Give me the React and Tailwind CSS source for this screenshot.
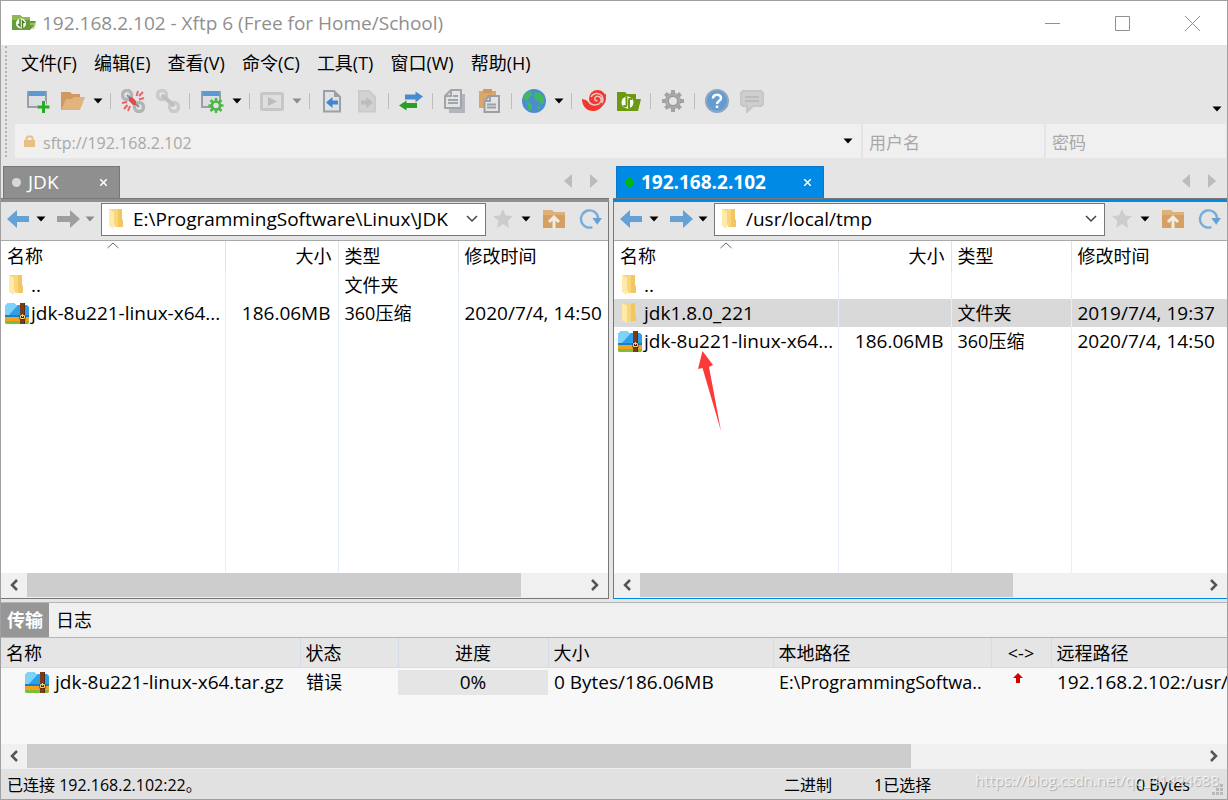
import { useState } from 'react';
import clsx from 'clsx';

const MENUS = ['文件(F)', '编辑(E)', '查看(V)', '命令(C)', '工具(T)', '窗口(W)', '帮助(H)'];

/* ---------- small glyphs ---------- */

function Caret({ className }) {
  return (
    <svg width="10" height="6" viewBox="0 0 10 6" className={clsx('shrink-0', className)} fill="currentColor">
      <path d="M0.500 0.500h9L5 5.500z" />
    </svg>
  );
}

function FolderIcon() {
  return (
    <svg width="16" height="22" viewBox="0 0 16 22" className="shrink-0">
      <path d="M1 1h13v18h-7z" fill="#f8d77c" />
      <path d="M10 1h4v10l1 1v7h-5z" fill="#f0c763" />
      <path d="M1 1l5 3v17l-5-3z" fill="#ffeaa9" />
    </svg>
  );
}

function ZipIcon() {
  return (
    <svg width="24" height="22" viewBox="0 0 24 22" className="shrink-0">
      <path d="M0 4l3-3h6l2 2h11l2 2v10H0z" fill="#2f9fe8" />
      <path d="M0 4l3-3h6l2 2h2L3 14H0z" fill="#7fd3fb" />
      <path d="M0 13h24v2H0z" fill="#1583c9" />
      <path d="M0 15h24v4H0z" fill="#f6a01d" />
      <path d="M0 19h24v2l-1 1H1l-1-1z" fill="#7cbf35" />
      <path d="M15 1h5v21h-5z" fill="#7a3b1c" />
      <path d="M19 1h1v21h-1z" fill="#5a2912" />
      <path d="M14.500 13.500h6v4h-6z" fill="#4d2310" />
      <path d="M15.500 13.500h4v3h-4zM17.500 12v3" fill="none" stroke="#f2cf7a" />
    </svg>
  );
}

function ArrowIcon({ back, className }) {
  return (
    <svg width="23" height="18" viewBox="0 0 23 18" className={clsx('shrink-0', className)} fill="currentColor">
      {back ? <path d="M0 9L10 0v6h12v6H10v6z" /> : <path d="M23 9L13 0v6H0v6h13v6z" />}
    </svg>
  );
}

function Svg({ children }) {
  return (
    <svg width="24" height="24" viewBox="0 0 24 24" fill="none" className="shrink-0">
      {children}
    </svg>
  );
}

const ICONS = {
  newSession: (
    <Svg>
      <path d="M2 3h18v15H2z" fill="#dcdee1" stroke="#9aa0a6" strokeWidth="2" />
      <path d="M2.500 2h17v5h-17z" fill="#5b9bd5" />
      <path d="M17.500 12v12M11.500 18h12" stroke="#e4e4e4" strokeWidth="5" />
      <path d="M17.500 12v12M11.500 18h12" stroke="#27ab27" strokeWidth="3" />
    </Svg>
  ),
  open: (
    <Svg>
      <path d="M0 3h9l2 2h8v16H0z" fill="#cf9960" />
      <path d="M5 10h6l2-2h11l-5 13H0z" fill="#e0b47c" />
    </Svg>
  ),
  disconnect: (
    <Svg>
      <circle cx="6" cy="6" r="4.500" stroke="#b2b5b8" strokeWidth="3.500" />
      <circle cx="18" cy="18" r="4.500" stroke="#b2b5b8" strokeWidth="3.500" />
      <path d="M6 6l3 3M15 15l3 3" stroke="#8a8f94" strokeWidth="2" />
      <path d="M8 8.500l3-.5 4 4v4h-3l-4-4z" fill="#e5484d" />
      <path d="M15.500 7l1.500-5M18 7l4-4M18 10.500l5-1.500M9 17l-2 5M6.500 16L3 20M6 13l-5 1" stroke="#ee6266" strokeWidth="2" />
    </Svg>
  ),
  connect: (
    <Svg>
      <circle cx="6" cy="6" r="4.500" stroke="#cacaca" strokeWidth="3.500" />
      <circle cx="18" cy="18" r="4.500" stroke="#cacaca" strokeWidth="3.500" />
      <path d="M7 7l10 9" stroke="#bfbfbf" strokeWidth="4" strokeLinecap="round" />
    </Svg>
  ),
  properties: (
    <Svg>
      <path d="M2 3h18v15H2z" fill="#dcdee1" stroke="#9aa0a6" strokeWidth="2" />
      <path d="M2.500 2h17v5h-17z" fill="#5b9bd5" />
      <path d="M16 9v15M8.500 16.500h15M10.500 11l11 11M21.500 11l-11 11" stroke="#4db648" strokeWidth="2.500" />
      <circle cx="16" cy="16.500" r="4" fill="#e2e3e5" stroke="#4db648" strokeWidth="2.500" />
    </Svg>
  ),
  play: (
    <Svg>
      <rect x="1.500" y="4.500" width="21" height="16" rx="1" fill="#dedede" stroke="#c6c6c6" strokeWidth="3" />
      <path d="M8 8l9 4.500L8 17z" fill="#bcbcbc" />
    </Svg>
  ),
  docIn: (
    <Svg>
      <path d="M4 2h10l6 6v14.500H4z" fill="#dfe1e3" stroke="#9aa0a6" strokeWidth="2" />
      <path d="M14 2v6h6" fill="#9aa0a6" />
      <path d="M6 13.500L12.500 8v3.500H18v4h-5.500V19z" fill="#4385cf" />
    </Svg>
  ),
  docOut: (
    <Svg>
      <path d="M4 2h10l6 6v14.500H4z" fill="#d2d2d2" stroke="#cbcbcb" strokeWidth="2" />
      <path d="M18 13.500L11.500 8v3.500H6v4h5.500V19z" fill="#bcbcbc" />
    </Svg>
  ),
  transfer: (
    <Svg>
      <path d="M24 7.500L16.500 2.500v3H6v5h10.500v3z" fill="#4a8ad0" />
      <path d="M0 16.500L7.500 11.500v2.500H18v5H7.500v2.500z" fill="#2a9f26" />
    </Svg>
  ),
  copy: (
    <Svg>
      <path d="M6 5h16v19H6z" fill="#b1b6be" />
      <path d="M8 1h10v18H2V7z" fill="#e3e3e3" stroke="#a0a5aa" strokeWidth="2" />
      <path d="M3 7h5V2M5 11h10M5 14h10M10 7h5" stroke="#a0a5aa" strokeWidth="2" />
    </Svg>
  ),
  paste: (
    <Svg>
      <path d="M1 2h17v17H1z" fill="#d9a76c" />
      <path d="M5 0h9v4H5z" fill="#cf9a5c" />
      <path d="M11 7h10v16H6.500V12z" fill="#e3e3e3" stroke="#9aa0a6" strokeWidth="2" />
      <path d="M7 12h5V8M9 15.500h9M9 18.500h9" stroke="#9aa0a6" strokeWidth="2" />
    </Svg>
  ),
  globe: (
    <Svg>
      <circle cx="12" cy="12" r="12" fill="#4c8bd0" />
      <path d="M2 6c2-3 4-4 7-4l1 4-3 3-1 3-3-1-2-1zM13 3l5 1 4 4v6l-3 2-2-4-4-1-1-4zM5 13l5 2v4l-2 3-2-2zM15 17l4 1-3 4z" fill="#3fb960" />
    </Svg>
  ),
  xshell: (
    <Svg>
      <circle cx="15.500" cy="9.500" r="8.500" fill="#f0382f" />
      <path d="M0 10c3 .5 5 1 7 4 3 3 8 3 11 0 2-2 3-5 2-8l4-1c0 7-3 15-11 17C5 23 0 17 0 10z" fill="#f0382f" />
      <path d="M7 13c3 4 10 4 12-1 1-4-3-6-5.500-4-2 2 0 4.500 2 3.500M9 8c2-4 8-5 11-1 1 2 1 5 0 7" stroke="#f2c4c0" strokeWidth="1.500" />
    </Svg>
  ),
  xftp: (
    <Svg>
      <path d="M0 3h8l2 2h9v5h5l-3 12H0z" fill="#6b9a10" />
      <circle cx="10.500" cy="13.500" r="6" fill="#fff" />
      <path d="M9.500 8v8c0 2-2.500 2-2.500 0M12 19v-8c0-2 2.500-2 2.500 0" stroke="#6b9a10" strokeWidth="2" />
    </Svg>
  ),
  gear: (
    <Svg>
      <path d="M12 1v22M1 12h22M4.500 4.500l15 15M19.500 4.500l-15 15" stroke="#a3a3a3" strokeWidth="4" />
      <circle cx="12" cy="12" r="6" fill="#e4e4e4" stroke="#999" strokeWidth="4" />
      <circle cx="12" cy="12" r="6.500" stroke="#acacac" strokeWidth="2" />
    </Svg>
  ),
  help: (
    <Svg>
      <circle cx="12" cy="12" r="11" fill="#659bd3" stroke="#8fa6c0" strokeWidth="2" />
      <path d="M8 9.500c0-5 8-5 8-.5 0 3-4 3-4 6M12 16.500V19" stroke="#fff" strokeWidth="2.500" />
    </Svg>
  ),
  chat: (
    <Svg>
      <path d="M3 2h18l2 2v11l-2 2H13l-6 6v-6H3l-2-2V4z" fill="#cecece" stroke="#c6c6c6" strokeWidth="2" />
      <path d="M5 8h14M5 12h14" stroke="#bcbcbc" strokeWidth="2" />
    </Svg>
  ),
};

const TOOLBAR = [
  ['newSession', '新建'], ['open', '打开'], ['caret', '打开列表'], ['sep'],
  ['disconnect', '断开'], ['connect', '重新连接'], ['sep'],
  ['properties', '属性'], ['caret', '属性列表'], ['sep'],
  ['play', '运行'], ['caretOff', '运行列表'], ['sep'],
  ['docIn', '传输到左侧'], ['docOut', '传输到右侧'], ['sep'],
  ['transfer', '同步'], ['sep'],
  ['copy', '复制'], ['paste', '粘贴'], ['sep'],
  ['globe', '语言'], ['caret', '语言列表'], ['sep'],
  ['xshell', 'Xshell'], ['xftp', 'Xftp'], ['sep'],
  ['gear', '选项'], ['sep'],
  ['help', '帮助'], ['chat', '反馈'],
];

function Toolbar() {
  return (
    <div className="flex items-center h-[38px] pl-[11px]">
      {TOOLBAR.map(([kind, label], i) => {
        if (kind === 'sep') {
          return (
            <span key={i} className="flex justify-center w-[9px]">
              <span className="w-px h-4 bg-[#bdbdbd]" />
            </span>
          );
        }
        if (kind === 'caret' || kind === 'caretOff') {
          return (
            <button key={i} aria-label={label} className="flex justify-center w-4">
              <Caret className={kind === 'caret' ? 'text-black' : 'text-[#8c8c8c]'} />
            </button>
          );
        }
        return (
          <button key={i} aria-label={label} className="pl-[6px] pr-[5px] shrink-0">
            {ICONS[kind]}
          </button>
        );
      })}
      <button aria-label="更多" className="ml-auto mt-4 mr-[5px]"><Caret /></button>
    </div>
  );
}

/* ---------- shared parts ---------- */

function ScrollBar({ thumb }) {
  return (
    <div className="flex h-[25px] bg-[#f0f0f0] shrink-0 pb-px">
      <button aria-label="向左滚动" className="flex items-center justify-center w-[26px] text-[#555]">
        <svg width="10" height="12" viewBox="0 0 10 12" fill="none" stroke="currentColor" strokeWidth="2.500"><path d="M8 1L3 6l5 5" /></svg>
      </button>
      <div className="flex-1">
        <div className="h-full bg-[#cdcdcd]" style={{ width: `${thumb}%` }} />
      </div>
      <button aria-label="向右滚动" className="flex items-center justify-center w-[26px] text-[#555]">
        <svg width="10" height="12" viewBox="0 0 10 12" fill="none" stroke="currentColor" strokeWidth="2.500"><path d="M2 1l5 5-5 5" /></svg>
      </button>
    </div>
  );
}

function FilePanel({ active, title, path, rows, thumb, children }) {
  const [dir, setDir] = useState(path);
  return (
    <section className="flex flex-col min-w-0">
      {/* Tabs */}
      <div className="flex items-end h-[32px]">
        <div
          className={clsx(
            'flex items-center h-8 pl-2 pr-2 border border-b-0 text-[19px] text-white',
            active ? 'ml-[3px] w-[208px] bg-[#008ae6] border-[#0a78c8] font-bold' : 'ml-[2px] w-[117px] bg-[#8f8f8f] border-[#777]',
          )}
        >
          <span className={clsx('w-[9px] h-[9px] rounded-full mr-[7px]', active ? 'bg-[#00b812]' : 'bg-[#d8d8d8]')} />
          <span>{title}</span>
          <button aria-label="关闭标签" className="ml-auto mr-1">
            <svg width="7" height="7" viewBox="0 0 7 7" stroke="currentColor" strokeWidth="1.500"><path d="M0 0l7 7M7 0L0 7" /></svg>
          </button>
        </div>
        <div className="flex gap-4 ml-auto mb-[10px] pr-[11px] text-[#bcbcbc]">
          <button aria-label="上一个标签">
            <svg width="9" height="14" viewBox="0 0 9 14" fill="currentColor"><path d="M8 0v14L0 7z" /></svg>
          </button>
          <button aria-label="下一个标签">
            <svg width="9" height="14" viewBox="0 0 9 14" fill="currentColor"><path d="M1 0v14l8-7z" /></svg>
          </button>
        </div>
      </div>
      <div className={clsx('h-1 border-t border-t-[#777]', active ? 'bg-[#008ae6]' : 'bg-[#8f8f8f]')} />

      <div className={clsx('flex flex-col flex-1 min-h-0 border-b', active ? 'border-l border-l-[#777] border-b-[#0087e0]' : 'border-r border-r-[#777] border-b-[#777]')}>
        {/* Navigation */}
        <div className="flex items-center h-[39px] pl-[6px] pr-[6px] pb-1 border-b border-[#a9a9a9] bg-[#e5e5e5]">
          <button aria-label="后退"><ArrowIcon back className="text-[#63a1d6]" /></button>
          <button aria-label="后退列表" className="ml-[6px] mr-[11px]"><Caret /></button>
          <button aria-label="前进"><ArrowIcon className={active ? 'text-[#63a1d6]' : 'text-[#9e9e9e]'} /></button>
          <button aria-label="前进列表" className="ml-[5px] mr-[6px]"><Caret className={active ? 'text-black' : 'text-[#8c8c8c]'} /></button>
          <div className="flex items-center flex-1 min-w-0 h-[33px] pl-[6px] border border-[#777] bg-white">
            <FolderIcon />
            <input
              aria-label="路径"
              value={dir}
              onChange={(e) => setDir(e.target.value)}
              className="flex-1 min-w-0 ml-[9px] text-[19px] outline-none"
            />
            <button aria-label="路径列表" className="mr-[7px]">
              <svg width="12" height="8" viewBox="0 0 12 8" fill="none" stroke="#444" strokeWidth="1.500"><path d="M1 1l5 5 5-5" /></svg>
            </button>
          </div>
          <button aria-label="收藏" className="ml-[7px] text-[#cccccc]">
            <svg width="20" height="20" viewBox="0 0 20 20" fill="currentColor"><path d="M10 0l2.800 6.500L20 7l-5 4.700L16 19l-6-4-6 4 1.500-7.300L0 7l7-.5z" /></svg>
          </button>
          <button aria-label="收藏列表" className="ml-2 mr-3"><Caret /></button>
          <button aria-label="上级目录">
            <svg width="22" height="20" viewBox="0 0 22 20">
              <path d="M0 1h9l2 2h11v16H0z" fill="#deb07a" />
              <path d="M0 6h22v13H0z" fill="#d5a063" />
              <path d="M6 13l5-5 5 5M11 9v11" fill="none" stroke="#f4ece2" strokeWidth="3" />
            </svg>
          </button>
          <button aria-label="刷新" className="ml-[14px]">
            <svg width="23" height="22" viewBox="0 0 24 22" fill="none">
              <path d="M14 19.500A9 9 0 1 1 20 10" stroke="#79add9" strokeWidth="2.500" />
              <path d="M14 10h10l-5 7z" fill="#63a1d6" />
            </svg>
          </button>
        </div>

        {/* File list */}
        <div className="relative flex-1 min-h-0 bg-white overflow-hidden">
          <table className="w-full h-full table-fixed border-collapse text-[18px]">
            <colgroup>
              <col className="w-[224px]" />
              <col className="w-[113px]" />
              <col className="w-[120px]" />
              <col />
            </colgroup>
            <thead>
              <tr className="h-[30px] text-left [&>th]:font-normal [&>th]:p-0 [&>th]:border-r [&>th]:border-[#e2e2e2] [&>th:last-child]:border-0">
                <th>
                  <div className="relative pl-[6px]">
                    名称
                    <svg width="12" height="7" viewBox="0 0 12 7" fill="none" stroke="#666" className="absolute left-[106px] -top-px"><path d="M0.500 6L6 1l5.500 5" /></svg>
                  </div>
                </th>
                <th><div className="pr-[6px] text-right">大小</div></th>
                <th><div className="pl-[6px]">类型</div></th>
                <th><div className="pl-[6px]">修改时间</div></th>
              </tr>
            </thead>
            <tbody className="[&_td]:p-0 [&_td]:border-r [&_td]:border-[#e6eef9] [&_td:last-child]:border-0 whitespace-nowrap">
              {rows.map((r) => (
                <tr key={r.name} className={clsx('h-7', r.selected && 'bg-[#d9d9d9]')}>
                  <td>
                    {r.kind === 'zip' ? (
                      <div className="flex items-center pl-1"><ZipIcon /><span className="ml-[2px] text-[19px] leading-7">{r.name}</span></div>
                    ) : (
                      <div className="flex items-center pl-[7px]"><FolderIcon /><span className="ml-[7px] text-[19px] leading-7">{r.name}</span></div>
                    )}
                  </td>
                  <td><div className="pr-[7px] text-right text-[19px] leading-7">{r.size}</div></td>
                  <td><div className="pl-[6px] leading-7">{r.type}</div></td>
                  <td><div className="pl-[6px] text-[19px] leading-7">{r.time}</div></td>
                </tr>
              ))}
              <tr><td /><td /><td /><td /></tr>
            </tbody>
          </table>
          {children}
        </div>
        <ScrollBar thumb={thumb} />
      </div>
    </section>
  );
}

const LOCAL = [
  { kind: 'dir', name: '..', type: '文件夹' },
  { kind: 'zip', name: 'jdk-8u221-linux-x64...', size: '186.06MB', type: '360压缩', time: '2020/7/4, 14:50' },
];

const REMOTE = [
  { kind: 'dir', name: '..' },
  { kind: 'dir', name: 'jdk1.8.0_221', type: '文件夹', time: '2019/7/4, 19:37', selected: true },
  { kind: 'zip', name: 'jdk-8u221-linux-x64...', size: '186.06MB', type: '360压缩', time: '2020/7/4, 14:50' },
];

function TitleBar() {
  return (
    <header className="flex items-center h-11 pl-[11px] bg-white text-[#8f8f8f] shrink-0">
      <svg width="24" height="16" viewBox="0 0 24 16" fill="none">
        <path d="M0 0h8l2 2h8v4h6l-2 5-4 4H0z" fill="#6a9b3a" />
        <path d="M0 0h8l2 2h8v3H0z" fill="#8dbb52" />
        <circle cx="9" cy="8.500" r="5" fill="#fff" />
        <path d="M8 4v7l-2-2M10.500 13V6l2 2" stroke="#4f7d26" strokeWidth="1.500" />
        <path d="M18 9h5l-2 5" stroke="#a9cf6c" strokeWidth="1.500" />
      </svg>
      <h1 className="ml-[6px] text-[19px]">192.168.2.102 - Xftp 6 (Free for Home/School)</h1>
      <div className="flex ml-auto">
        <button aria-label="最小化" className="flex items-center justify-center w-[70px] h-11">
          <svg width="15" height="15" viewBox="0 0 15 15" stroke="#909090"><path d="M0 7.500h15" /></svg>
        </button>
        <button aria-label="最大化" className="flex items-center justify-center w-[70px] h-11">
          <svg width="15" height="15" viewBox="0 0 15 15" fill="none" stroke="#909090"><path d="M0.500 0.500h14v14h-14z" /></svg>
        </button>
        <button aria-label="关闭" className="flex items-center justify-center w-[70px] h-11">
          <svg width="15" height="15" viewBox="0 0 15 15" stroke="#909090"><path d="M0 0l15 15M15 0L0 15" /></svg>
        </button>
      </div>
    </header>
  );
}

function AddressBar() {
  return (
    <form className="flex gap-[2px] h-[34px] ml-[6px] mr-px text-[16px] text-[#a8a8a8]" onSubmit={(e) => e.preventDefault()}>
      <div className="flex items-center flex-1 min-w-0 pl-[9px] bg-[#f0f0f0]">
        <svg width="11" height="12" viewBox="0 0 11 12" fill="none">
          <path d="M2.500 6V3.500a2 2 0 0 1 2-2h2a2 2 0 0 1 2 2V6" stroke="#e8c084" strokeWidth="2" />
          <path d="M0 5h11v7H0z" fill="#e8c084" />
        </svg>
        <input aria-label="地址" defaultValue="sftp://192.168.2.102" className="flex-1 min-w-0 ml-2 pt-1 outline-none" />
        <button type="button" aria-label="地址列表" className="mr-2 text-black"><Caret /></button>
      </div>
      <input aria-label="用户名" placeholder="用户名" className="w-[181px] pl-[6px] pt-1 text-[17px] bg-[#f0f0f0] outline-none placeholder:text-[#a8a8a8]" />
      <input type="password" aria-label="密码" placeholder="密码" className="w-[180px] pl-[6px] pt-1 text-[17px] bg-[#f0f0f0] outline-none placeholder:text-[#a8a8a8]" />
    </form>
  );
}

function Transfers() {
  return (
    <section className="flex flex-col h-[167px] mt-[3px] border-t border-[#b4b4b4] shrink-0">
      <div className="flex h-[35px] bg-[#f0f0f0] border-b border-[#b4b4b4] text-[18px]">
        <button className="w-12 bg-[#969696] text-white font-bold">传输</button>
        <button className="px-[7px]">日志</button>
      </div>
      <div className="flex-1 min-h-0 bg-[#f8f8f8] overflow-hidden">
        <table className="w-full table-fixed border-collapse text-[18px] text-left whitespace-nowrap">
          <colgroup>
            <col className="w-[299px]" />
            <col className="w-[98px]" />
            <col className="w-[150px]" />
            <col className="w-[225px]" />
            <col className="w-[218px]" />
            <col className="w-[60px]" />
            <col />
          </colgroup>
          <thead>
            <tr className="h-[29px] bg-[#e5e5e5] border-b border-[#d3dbe6] [&>th]:font-normal [&>th]:pt-[2px] [&>th]:pb-0 [&>th]:px-[5px] [&>th]:border-r [&>th]:border-[#d3dbe6] [&>th:last-child]:border-r-0">
              <th>名称</th>
              <th>状态</th>
              <th className="text-center">进度</th>
              <th>大小</th>
              <th>本地路径</th>
              <th className="text-center">&lt;-&gt;</th>
              <th>远程路径</th>
            </tr>
          </thead>
          <tbody>
            <tr className="h-7 text-[19px] [&>td]:p-0">
              <td><div className="flex items-center pl-6"><ZipIcon /><span className="ml-[6px]">jdk-8u221-linux-x64.tar.gz</span></div></td>
              <td><div className="pl-[6px] text-[18px]">错误</div></td>
              <td><div className="h-[25px] leading-[25px] bg-[#e5e5e5] text-center">0%</div></td>
              <td><div className="pl-[6px]">0 Bytes/186.06MB</div></td>
              <td><div className="pl-[6px] text-[18px]">E:\ProgrammingSoftwa..</div></td>
              <td>
                <div className="pr-[7px] pb-2">
                  <svg width="10" height="10" viewBox="0 0 10 10" fill="#d00000" className="mx-auto"><path d="M5 0l5 5H7v5H3V5H0z" /></svg>
                </div>
              </td>
              <td className="overflow-hidden"><div className="pl-[6px]">192.168.2.102:/usr/</div></td>
            </tr>
          </tbody>
        </table>
      </div>
      <ScrollBar thumb={75.3} />
    </section>
  );
}

function StatusBar() {
  return (
    <footer className="relative flex items-center h-[30px] pl-[6px] pt-[2px] bg-[#e1e1e1] text-[16px] shrink-0">
      <span className="flex-1">已连接 192.168.2.102:22。</span>
      <span className="w-[90px]">二进制</span>
      <span className="w-[262px]">1已选择</span>
      <span className="w-[91px]">0 Bytes</span>
      <svg width="11" height="11" viewBox="0 0 11 11" fill="#b9b9b9" className="absolute right-1 bottom-1">
        <path d="M8 0h3v3H8zM4 4h3v3H4zM8 4h3v3H8zM0 8h3v3H0zM4 8h3v3H4zM8 8h3v3H8z" />
      </svg>
      <span className="absolute right-[8px] top-0 text-[15px] text-white/70 [text-shadow:1px_1px_1px_rgba(0,0,0,0.25)]">
        https://blog.csdn.net/qq_41424688
      </span>
    </footer>
  );
}

export default function App() {
  return (
    <div className="flex flex-col h-screen overflow-hidden border border-[#a0a0a0] bg-[#e5e5e5] text-black font-['Open_Sans','Noto_Sans_CJK_SC',sans-serif]">
      <TitleBar />
      <div className="flex h-[113px] shrink-0">
        <div className="w-0 my-px ml-1 mr-[2px] border-l-2 border-dotted border-[#b4b4b4]" />
        <div className="flex flex-col flex-1 min-w-0">
          <nav className="flex items-center gap-[17px] h-[37px] pl-3 text-[18px]">
            {MENUS.map((m) => <button key={m}>{m}</button>)}
          </nav>
          <Toolbar />
          <div className="mt-auto"><AddressBar /></div>
        </div>
      </div>
      <main className="grid grid-cols-[608fr_614fr] gap-1 flex-1 min-h-0 mt-2">
        <FilePanel title="JDK" path="E:\ProgrammingSoftware\Linux\JDK" rows={LOCAL} thumb={89} />
        <FilePanel active title="192.168.2.102" path="/usr/local/tmp" rows={REMOTE} thumb={66.5}>
          <svg width="24" height="81" viewBox="0 0 24 81" fill="#fb3a3a" className="absolute left-[84px] top-[110px]">
            <path d="M4.500 0L15 14l-4 2 12 64L4.500 17 0 18z" />
          </svg>
        </FilePanel>
      </main>
      <Transfers />
      <StatusBar />
    </div>
  );
}
